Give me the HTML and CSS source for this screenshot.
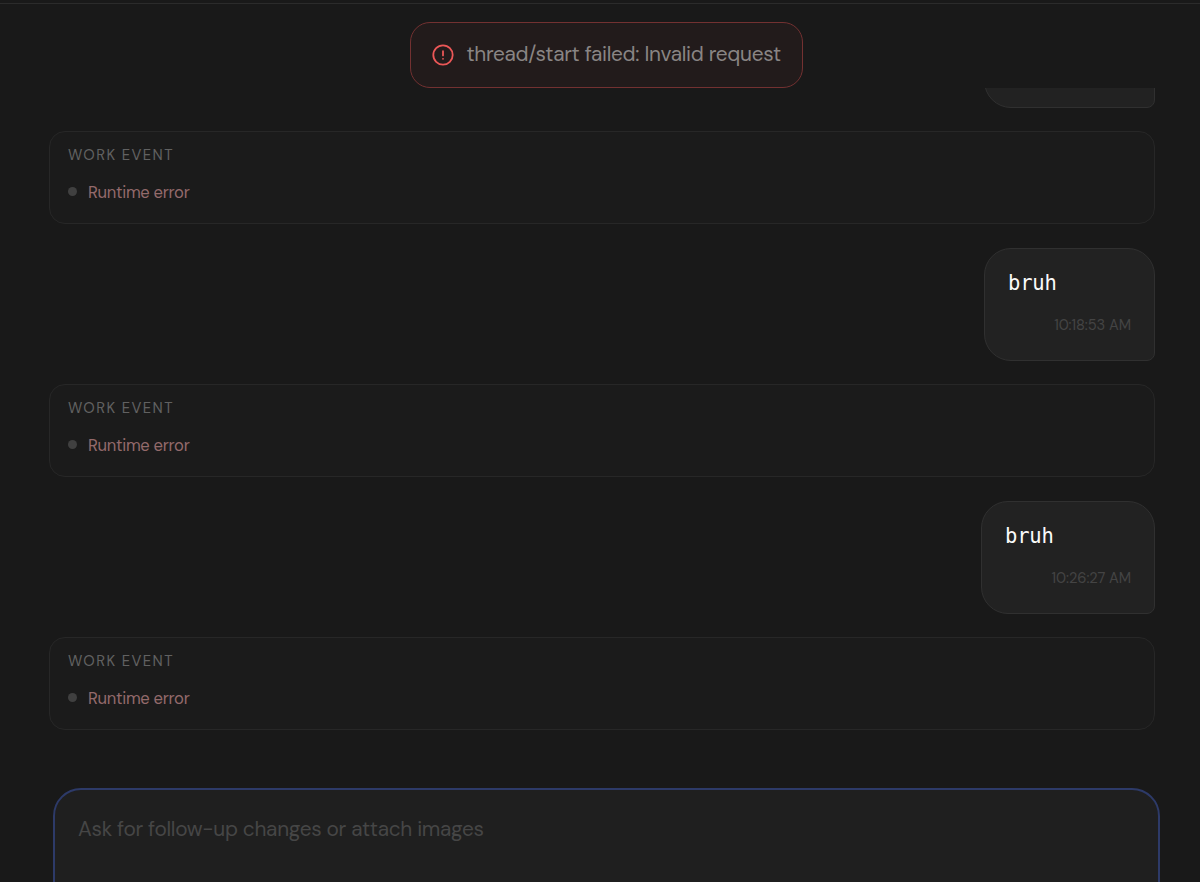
FILE: index.html
```html
<!DOCTYPE html>
<html lang="en">
<head>
<meta charset="utf-8">
<title>Thread</title>
<link rel="stylesheet" href="styles.css">
</head>
<body>

<header class="topbar"></header>

<div class="alert-row">
  <div class="alert" role="alert">
    <svg class="alert-icon" viewBox="0 0 22 22" fill="none" stroke="currentColor" stroke-width="1.8" stroke-linecap="round">
      <circle cx="11" cy="11" r="9.7"/>
      <path d="M11 7.2v4.2M11 14.8h.01"/>
    </svg>
    <span class="alert-text">thread/start failed: Invalid request</span>
  </div>
</div>

<main class="thread">
  <div class="bubble first"></div>

  <section class="event">
    <h2 class="event-title">Work event</h2>
    <div class="event-item"><span class="dot"></span><span class="event-text">Runtime error</span></div>
  </section>

  <div class="bubble first">
    <p class="message">bruh</p>
    <div class="meta"><time class="time">10:18:53 AM</time></div>
  </div>

  <section class="event">
    <h2 class="event-title">Work event</h2>
    <div class="event-item"><span class="dot"></span><span class="event-text">Runtime error</span></div>
  </section>

  <div class="bubble second">
    <p class="message">bruh</p>
    <div class="meta"><time class="time">10:26:27 AM</time></div>
  </div>

  <section class="event">
    <h2 class="event-title">Work event</h2>
    <div class="event-item"><span class="dot"></span><span class="event-text">Runtime error</span></div>
  </section>
</main>

<div class="composer">
  <span class="placeholder">Ask for follow-up changes or attach images</span>
</div>

</body>
</html>
```
FILE: styles.css
```css
* { box-sizing: border-box; }

body {
  margin: 0;
  height: 882px;
  overflow: hidden;
  display: flex;
  flex-direction: column;
  background: #191919;
  font-family: "DM Sans", Inter, sans-serif;
}

.topbar {
  flex: none;
  height: 4px;
  border-bottom: 1px solid #2b2b2b;
}

/* error banner */
.alert-row {
  flex: none;
  height: 84px;
  padding: 18px 0 0 410px;
}
.alert {
  display: flex;
  align-items: center;
  gap: 12.5px;
  width: 393px;
  height: 66px;
  padding: 0 0 1px 21px;
  border: 1px solid #733131;
  border-radius: 20px;
  background: #221b1b;
}
.alert-icon {
  flex: none;
  width: 22px;
  height: 22px;
  color: #eb5757;
}
.alert-text {
  margin-bottom: 2px;
  font-size: 20.8px;
  line-height: 28px;
  letter-spacing: -0.29px;
  color: #898584;
  white-space: nowrap;
}

/* messages, pinned to the bottom */
.thread {
  flex: none;
  height: 700px;
  padding: 0 45px 58px 49px;
  overflow: hidden;
  display: flex;
  flex-direction: column;
  justify-content: flex-end;
  gap: 24px;
}

.event {
  flex: none;
  height: 93px;
  margin-top: -1px;
  padding: 14px 18px;
  border: 1px solid #272727;
  border-radius: 16px;
  background: #1b1b1b;
}
.event-title {
  margin: 0;
  font-size: 14.8px;
  font-weight: 400;
  line-height: 18px;
  letter-spacing: 1.4px;
  text-transform: uppercase;
  color: #616161;
}
.event-item {
  display: flex;
  align-items: center;
  gap: 11px;
  margin-top: 17px;
  line-height: 24px;
}
.dot {
  width: 9px;
  height: 9px;
  margin-bottom: 3px;
  border-radius: 50%;
  background: #404040;
}
.event-text {
  font-size: 16.6px;
  letter-spacing: -0.3px;
  color: #936a6b;
}

.bubble {
  flex: none;
  align-self: flex-end;
  height: 113px;
  padding: 20px 23px;
  border: 1px solid #303030;
  border-radius: 27px 27px 8px 27px;
  background: #222222;
}
.first { width: 171px; }
.second { width: 174px; }
.message {
  margin: 0;
  font: 20.5px/28px "DejaVu Sans Mono", monospace;
  letter-spacing: -0.2px;
  color: #fafafa;
}
.meta {
  margin-top: 18px;
  text-align: right;
  line-height: 20px;
}
.time {
  font-size: 14.7px;
  letter-spacing: -0.08px;
  color: #444444;
}

.composer {
  flex: none;
  width: 1107px;
  height: 130px;
  margin-left: 53px;
  padding: 25px 23px;
  border: 2px solid #2d3a68;
  border-radius: 28px;
  background: #1f1f1f;
}
.placeholder {
  font-size: 20.8px;
  line-height: 28px;
  letter-spacing: -0.3px;
  color: #464646;
}
```
